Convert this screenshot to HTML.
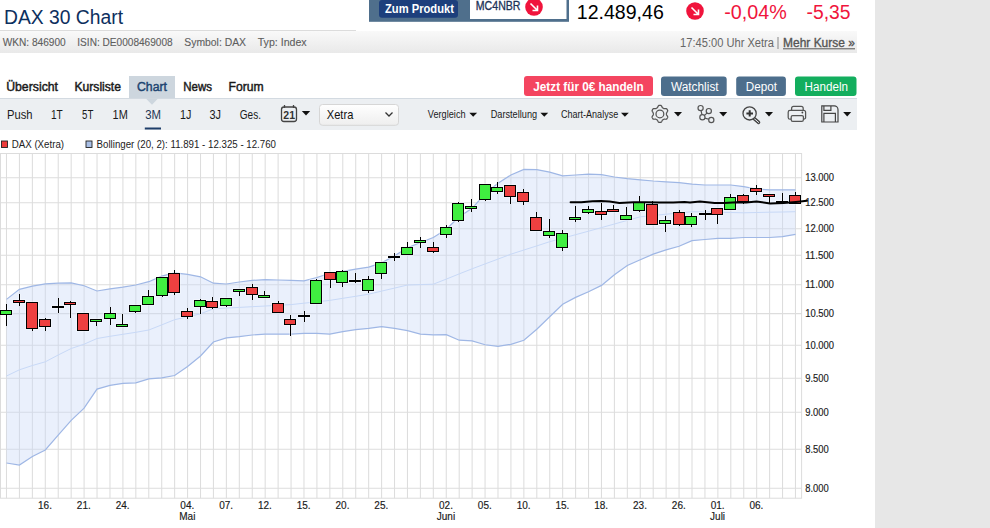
<!DOCTYPE html><html><head><meta charset="utf-8"><style>html,body{margin:0;padding:0;width:990px;height:528px;overflow:hidden;background:#fff}svg{display:block}text{font-family:"Liberation Sans", sans-serif}</style></head><body>
<svg width="990" height="528" viewBox="0 0 990 528">
<defs><linearGradient id="gb" x1="0" y1="0" x2="0" y2="1"><stop offset="0" stop-color="#f9f9f9"/><stop offset="1" stop-color="#e9e9e9"/></linearGradient><linearGradient id="gs" x1="0" y1="0" x2="0" y2="1"><stop offset="0" stop-color="#ffffff"/><stop offset="1" stop-color="#eeeeee"/></linearGradient></defs>
<rect x="875" y="0" width="115" height="528" fill="#e7e7e7"/>
<text x="4" y="24" font-size="19.5" font-weight="400" fill="#0d2f5e" text-anchor="start" textLength="119" lengthAdjust="spacingAndGlyphs">DAX 30 Chart</text>
<rect x="0" y="30" width="356" height="1" fill="#dcdcdc"/>
<rect x="0" y="31" width="857" height="22" fill="url(#gb)"/>
<text x="2.7" y="45.8" font-size="11" font-weight="400" fill="#5e5e5e" text-anchor="start" textLength="63.0" lengthAdjust="spacingAndGlyphs" stroke="#5e5e5e" stroke-width="0.12">WKN: 846900</text>
<text x="77.3" y="45.8" font-size="11" font-weight="400" fill="#5e5e5e" text-anchor="start" textLength="95.4" lengthAdjust="spacingAndGlyphs" stroke="#5e5e5e" stroke-width="0.12">ISIN: DE0008469008</text>
<text x="184.3" y="45.8" font-size="11" font-weight="400" fill="#5e5e5e" text-anchor="start" textLength="61.7" lengthAdjust="spacingAndGlyphs" stroke="#5e5e5e" stroke-width="0.12">Symbol: DAX</text>
<text x="257.7" y="45.8" font-size="11" font-weight="400" fill="#5e5e5e" text-anchor="start" textLength="49.0" lengthAdjust="spacingAndGlyphs" stroke="#5e5e5e" stroke-width="0.12">Typ: Index</text>
<rect x="369" y="0" width="200" height="21.8" fill="#4f6f8c"/>
<rect x="470" y="0" width="96.5" height="19" fill="#ffffff"/>
<rect x="379" y="0" width="79" height="17.8" rx="3" fill="#1d3f7c"/>
<text x="385" y="13.2" font-size="12.5" font-weight="700" fill="#ffffff" text-anchor="start" textLength="69" lengthAdjust="spacingAndGlyphs">Zum Produkt</text>
<text x="475.8" y="9.9" font-size="12.2" font-weight="400" fill="#1b3257" text-anchor="start" textLength="44.7" lengthAdjust="spacingAndGlyphs" stroke="#1b3257" stroke-width="0.3">MC4NBR</text>
<circle cx="534" cy="7" r="8.8" fill="#f0143c"/>
<path d="M530.5 3.5 L537.5 10.5 M537.5 5.5 L537.5 10.5 L532.5 10.5" stroke="#fff" stroke-width="1.6" fill="none"/>
<text x="576.8" y="18.9" font-size="19.6" font-weight="400" fill="#000000" text-anchor="start" textLength="87" lengthAdjust="spacingAndGlyphs">12.489,46</text>
<circle cx="695" cy="11" r="8.8" fill="#f0143c"/>
<path d="M691.5 7.5 L698.5 14.5 M698.5 9.5 L698.5 14.5 L693.5 14.5" stroke="#fff" stroke-width="1.6" fill="none"/>
<text x="724.2" y="18.8" font-size="20" font-weight="400" fill="#f0143c" text-anchor="start" textLength="62.6" lengthAdjust="spacingAndGlyphs">-0,04%</text>
<text x="806.6" y="18.8" font-size="20" font-weight="400" fill="#f0143c" text-anchor="start" textLength="44" lengthAdjust="spacingAndGlyphs">-5,35</text>
<text x="680.1" y="47.2" font-size="12" font-weight="400" fill="#666666" text-anchor="start" textLength="93.9" lengthAdjust="spacingAndGlyphs">17:45:00 Uhr Xetra</text>
<rect x="777.5" y="37" width="1" height="12" fill="#888"/>
<text x="783.1" y="47.2" font-size="12" font-weight="400" fill="#555555" text-anchor="start" textLength="71.7" lengthAdjust="spacingAndGlyphs" stroke="#555555" stroke-width="0.35">Mehr Kurse »</text>
<rect x="783" y="48.3" width="72" height="1" fill="#555"/>
<rect x="129" y="76" width="46" height="22.5" fill="#cdd6de"/>
<text x="6.2" y="91" font-size="12.5" font-weight="400" fill="#1a1a1a" text-anchor="start" textLength="51.8" lengthAdjust="spacingAndGlyphs" stroke="#1a1a1a" stroke-width="0.45">Übersicht</text>
<text x="74.4" y="91" font-size="12.5" font-weight="400" fill="#1a1a1a" text-anchor="start" textLength="46.6" lengthAdjust="spacingAndGlyphs" stroke="#1a1a1a" stroke-width="0.45">Kursliste</text>
<text x="137" y="91" font-size="12.5" font-weight="400" fill="#1c4470" text-anchor="start" textLength="30" lengthAdjust="spacingAndGlyphs" stroke="#1c4470" stroke-width="0.45">Chart</text>
<text x="183.3" y="91" font-size="12.5" font-weight="400" fill="#1a1a1a" text-anchor="start" textLength="28.7" lengthAdjust="spacingAndGlyphs" stroke="#1a1a1a" stroke-width="0.45">News</text>
<text x="228.5" y="91" font-size="12.5" font-weight="400" fill="#1a1a1a" text-anchor="start" textLength="35.1" lengthAdjust="spacingAndGlyphs" stroke="#1a1a1a" stroke-width="0.45">Forum</text>
<rect x="524" y="76" width="129" height="20" rx="3" fill="#f44560"/>
<text x="533.3" y="90.6" font-size="12.5" font-weight="700" fill="#ffffff" text-anchor="start" textLength="110.3" lengthAdjust="spacingAndGlyphs">Jetzt für 0€ handeln</text>
<rect x="661" y="76.4" width="65.7" height="19.5" rx="3" fill="#4d6e8c"/>
<text x="671" y="90.6" font-size="12.5" font-weight="400" fill="#ffffff" text-anchor="start" textLength="47.6" lengthAdjust="spacingAndGlyphs">Watchlist</text>
<rect x="736.2" y="76.4" width="49.7" height="19.5" rx="3" fill="#4d6e8c"/>
<text x="745.8" y="90.6" font-size="12.5" font-weight="400" fill="#ffffff" text-anchor="start" textLength="31.2" lengthAdjust="spacingAndGlyphs">Depot</text>
<rect x="795" y="76.4" width="61.5" height="19.5" rx="3" fill="#13ae5e"/>
<text x="804.6" y="90.6" font-size="12.5" font-weight="400" fill="#ffffff" text-anchor="start" textLength="43.4" lengthAdjust="spacingAndGlyphs">Handeln</text>
<rect x="0" y="98" width="857" height="1" fill="#d3dae1"/>
<rect x="0" y="99" width="857" height="31" fill="#eceff2"/>
<path d="M145.9 98.5 L158 98.5 L152 104.8 Z" fill="#cdd6de"/>
<text x="7" y="119.2" font-size="12.5" font-weight="400" fill="#1a1a1a" text-anchor="start" textLength="25.5" lengthAdjust="spacingAndGlyphs">Push</text>
<text x="51" y="119.2" font-size="12.5" font-weight="400" fill="#1a1a1a" text-anchor="start" textLength="11.8" lengthAdjust="spacingAndGlyphs">1T</text>
<text x="82" y="119.2" font-size="12.5" font-weight="400" fill="#1a1a1a" text-anchor="start" textLength="11.3" lengthAdjust="spacingAndGlyphs">5T</text>
<text x="112.6" y="119.2" font-size="12.5" font-weight="400" fill="#1a1a1a" text-anchor="start" textLength="15.2" lengthAdjust="spacingAndGlyphs">1M</text>
<text x="145.2" y="119.2" font-size="12.5" font-weight="400" fill="#1f3552" text-anchor="start" textLength="15.8" lengthAdjust="spacingAndGlyphs">3M</text>
<text x="180" y="119.2" font-size="12.5" font-weight="400" fill="#1a1a1a" text-anchor="start" textLength="11.4" lengthAdjust="spacingAndGlyphs">1J</text>
<text x="209.5" y="119.2" font-size="12.5" font-weight="400" fill="#1a1a1a" text-anchor="start" textLength="11.5" lengthAdjust="spacingAndGlyphs">3J</text>
<text x="239.8" y="119.2" font-size="12.5" font-weight="400" fill="#1a1a1a" text-anchor="start" textLength="21.2" lengthAdjust="spacingAndGlyphs">Ges.</text>
<rect x="144.8" y="127.5" width="16.2" height="2" fill="#1f3f6a"/>
<rect x="281.5" y="107" width="15" height="14.5" rx="2.5" fill="none" stroke="#444" stroke-width="1.3"/>
<path d="M284.5 105 v3 M293.5 105 v3" stroke="#444" stroke-width="1.3"/>
<text x="283.3" y="119.3" font-size="10.3" font-weight="700" fill="#333" text-anchor="start" textLength="11.7" lengthAdjust="spacingAndGlyphs">21</text>
<path d="M301.8 111 L310.2 111 L306 115.6 Z" fill="#111"/>
<rect x="319.5" y="104.5" width="79" height="20.8" rx="3" fill="url(#gs)" stroke="#d6d6d6" stroke-width="1"/>
<text x="326.8" y="119" font-size="13" font-weight="400" fill="#111111" text-anchor="start" textLength="26.5" lengthAdjust="spacingAndGlyphs">Xetra</text>
<path d="M385.5 112.5 L389 116 L392.5 112.5" stroke="#333" stroke-width="1.3" fill="none"/>
<text x="427.8" y="118.3" font-size="11" font-weight="400" fill="#1a1a1a" text-anchor="start" textLength="37.8" lengthAdjust="spacingAndGlyphs">Vergleich</text>
<path d="M469.3 112.8 L477.1 112.8 L473.2 116.8 Z" fill="#111"/>
<text x="490.7" y="118.3" font-size="11" font-weight="400" fill="#1a1a1a" text-anchor="start" textLength="46.4" lengthAdjust="spacingAndGlyphs">Darstellung</text>
<path d="M540.4 112.8 L548.1999999999999 112.8 L544.3 116.8 Z" fill="#111"/>
<text x="561" y="118.3" font-size="11" font-weight="400" fill="#1a1a1a" text-anchor="start" textLength="57.2" lengthAdjust="spacingAndGlyphs">Chart-Analyse</text>
<path d="M621 112.8 L628.8 112.8 L624.9 116.8 Z" fill="#111"/>
<polygon points="666.50,113.90 666.49,114.19 666.47,114.48 666.44,114.76 666.63,115.09 666.91,115.45 667.19,115.85 667.45,116.28 667.66,116.73 667.75,117.15 667.60,117.49 667.44,117.82 667.26,118.15 667.07,118.47 666.86,118.78 666.64,119.07 666.23,119.21 665.74,119.25 665.24,119.24 664.75,119.19 664.30,119.14 663.92,119.14 663.69,119.31 663.45,119.47 663.20,119.62 662.95,119.75 662.69,119.88 662.43,120.00 662.24,120.33 662.06,120.75 661.85,121.19 661.61,121.63 661.33,122.04 661.01,122.33 660.64,122.37 660.27,122.39 659.90,122.40 659.53,122.39 659.16,122.37 658.79,122.33 658.47,122.04 658.19,121.63 657.95,121.19 657.74,120.75 657.56,120.33 657.37,120.00 657.11,119.88 656.85,119.75 656.60,119.62 656.35,119.47 656.11,119.31 655.88,119.14 655.50,119.14 655.05,119.19 654.56,119.24 654.06,119.25 653.57,119.21 653.16,119.07 652.94,118.78 652.73,118.47 652.54,118.15 652.36,117.82 652.20,117.49 652.05,117.15 652.14,116.73 652.35,116.28 652.61,115.85 652.89,115.45 653.17,115.09 653.36,114.76 653.33,114.48 653.31,114.19 653.30,113.90 653.31,113.61 653.33,113.32 653.36,113.04 653.17,112.71 652.89,112.35 652.61,111.95 652.35,111.52 652.14,111.07 652.05,110.65 652.20,110.31 652.36,109.98 652.54,109.65 652.73,109.33 652.94,109.02 653.16,108.73 653.57,108.59 654.06,108.55 654.56,108.56 655.05,108.61 655.50,108.66 655.88,108.66 656.11,108.49 656.35,108.33 656.60,108.18 656.85,108.05 657.11,107.92 657.37,107.80 657.56,107.47 657.74,107.05 657.95,106.61 658.19,106.17 658.47,105.76 658.79,105.47 659.16,105.43 659.53,105.41 659.90,105.40 660.27,105.41 660.64,105.43 661.01,105.47 661.33,105.76 661.61,106.17 661.85,106.61 662.06,107.05 662.24,107.47 662.43,107.80 662.69,107.92 662.95,108.05 663.20,108.18 663.45,108.33 663.69,108.49 663.92,108.66 664.30,108.66 664.75,108.61 665.24,108.56 665.74,108.55 666.23,108.59 666.64,108.73 666.86,109.02 667.07,109.33 667.26,109.65 667.44,109.98 667.60,110.31 667.75,110.65 667.66,111.07 667.45,111.52 667.19,111.95 666.91,112.35 666.63,112.71 666.44,113.04 666.47,113.32 666.49,113.61" fill="none" stroke="#555" stroke-width="1.25" stroke-linejoin="round"/>
<circle cx="659.9" cy="113.9" r="3.9" fill="none" stroke="#555" stroke-width="1.25"/>
<path d="M674 112 L682 112 L678 116.5 Z" fill="#111"/>
<path d="M700.6 108.1 L702.4 117.2 L709 111.4 M702.3 117.3 L711.4 120" stroke="#555" stroke-width="1.2" fill="none"/>
<circle cx="700.6" cy="108.1" r="2.6" fill="#eceff2" stroke="#555" stroke-width="1.2"/>
<circle cx="708.8" cy="111.1" r="2.6" fill="#eceff2" stroke="#555" stroke-width="1.2"/>
<circle cx="702.4" cy="117.2" r="2.6" fill="#eceff2" stroke="#555" stroke-width="1.2"/>
<circle cx="711.3" cy="120" r="2.6" fill="#eceff2" stroke="#555" stroke-width="1.2"/>
<path d="M719.2 112 L727.2 112 L723.2 116.5 Z" fill="#111"/>
<path d="M754.2 118.6 L758.6 122.4" stroke="#444" stroke-width="3.4" stroke-linecap="round" fill="none"/>
<path d="M754.2 118.6 L758.6 122.4" stroke="#eceff2" stroke-width="1.0" stroke-linecap="round" fill="none"/>
<circle cx="749.6" cy="113.4" r="6.6" fill="#eceff2" stroke="#444" stroke-width="1.3"/>
<path d="M746.4 113.4 h6.6 M749.7 110.2 v6.4" stroke="#333" stroke-width="2" fill="none"/>
<path d="M765 112 L773 112 L769 116.5 Z" fill="#111"/>
<path d="M791.6 110.2 v-1.8 a2 2 0 0 1 2 -2 h7.6 a2 2 0 0 1 2 2 v1.8" stroke="#555" stroke-width="1.25" fill="none"/>
<path d="M791.2 119.2 h-1.2 a1.8 1.8 0 0 1 -1.8 -1.8 v-5.2 a1.8 1.8 0 0 1 1.8 -1.8 h13.8 a1.8 1.8 0 0 1 1.8 1.8 v5.2 a1.8 1.8 0 0 1 -1.8 1.8 h-1.2" stroke="#555" stroke-width="1.25" fill="none"/>
<path d="M792.6 115.6 h9.4 a1.4 1.4 0 0 1 1.4 1.4 v2.8 a1.6 1.6 0 0 1 -1.6 1.6 h-9 a1.6 1.6 0 0 1 -1.6 -1.6 v-2.8 a1.4 1.4 0 0 1 1.4 -1.4 z" stroke="#555" stroke-width="1.25" fill="#eceff2"/>
<circle cx="802.4" cy="112.5" r="0.9" fill="#444"/>
<path d="M821.8 105.9 h12.4 a3.8 3.8 0 0 1 3.8 3.8 v12.3 h-16.2 z" stroke="#444" stroke-width="1.2" fill="none"/>
<path d="M823.9 105.9 v4.4 h7 v-4.4 M823.9 122 v-8.6 h11.5 v8.6" stroke="#444" stroke-width="1.2" fill="none"/>
<path d="M843.2 112 L851.2 112 L847.2 116.5 Z" fill="#111"/>
<rect x="1.5" y="141" width="6" height="6.5" fill="#ee3b3b" stroke="#222" stroke-width="0.9"/>
<text x="11.7" y="147.9" font-size="10" font-weight="400" fill="#222222" text-anchor="start" textLength="52.4" lengthAdjust="spacingAndGlyphs">DAX (Xetra)</text>
<rect x="86" y="141" width="6" height="6.5" fill="#a9bfe6" stroke="#222" stroke-width="0.9"/>
<text x="96.6" y="147.9" font-size="10" font-weight="400" fill="#222222" text-anchor="start" textLength="179.4" lengthAdjust="spacingAndGlyphs">Bollinger (20, 2): 11.891 - 12.325 - 12.760</text>
<rect x="0" y="153.5" width="801.6" height="344.7" fill="#ffffff"/>
<line x1="6.5" y1="153.5" x2="6.5" y2="498.2" stroke="#dddddd" stroke-width="1.05"/>
<line x1="19.43" y1="153.5" x2="19.43" y2="498.2" stroke="#dddddd" stroke-width="1.05"/>
<line x1="32.37" y1="153.5" x2="32.37" y2="498.2" stroke="#dddddd" stroke-width="1.05"/>
<line x1="45.3" y1="153.5" x2="45.3" y2="498.2" stroke="#dddddd" stroke-width="1.05"/>
<line x1="58.24" y1="153.5" x2="58.24" y2="498.2" stroke="#dddddd" stroke-width="1.05"/>
<line x1="71.17" y1="153.5" x2="71.17" y2="498.2" stroke="#dddddd" stroke-width="1.05"/>
<line x1="84.1" y1="153.5" x2="84.1" y2="498.2" stroke="#dddddd" stroke-width="1.05"/>
<line x1="97.04" y1="153.5" x2="97.04" y2="498.2" stroke="#dddddd" stroke-width="1.05"/>
<line x1="109.97" y1="153.5" x2="109.97" y2="498.2" stroke="#dddddd" stroke-width="1.05"/>
<line x1="122.91" y1="153.5" x2="122.91" y2="498.2" stroke="#dddddd" stroke-width="1.05"/>
<line x1="135.84" y1="153.5" x2="135.84" y2="498.2" stroke="#dddddd" stroke-width="1.05"/>
<line x1="148.77" y1="153.5" x2="148.77" y2="498.2" stroke="#dddddd" stroke-width="1.05"/>
<line x1="161.71" y1="153.5" x2="161.71" y2="498.2" stroke="#dddddd" stroke-width="1.05"/>
<line x1="174.64" y1="153.5" x2="174.64" y2="498.2" stroke="#dddddd" stroke-width="1.05"/>
<line x1="187.58" y1="153.5" x2="187.58" y2="498.2" stroke="#dddddd" stroke-width="1.05"/>
<line x1="200.51" y1="153.5" x2="200.51" y2="498.2" stroke="#dddddd" stroke-width="1.05"/>
<line x1="213.44" y1="153.5" x2="213.44" y2="498.2" stroke="#dddddd" stroke-width="1.05"/>
<line x1="226.38" y1="153.5" x2="226.38" y2="498.2" stroke="#dddddd" stroke-width="1.05"/>
<line x1="239.31" y1="153.5" x2="239.31" y2="498.2" stroke="#dddddd" stroke-width="1.05"/>
<line x1="252.25" y1="153.5" x2="252.25" y2="498.2" stroke="#dddddd" stroke-width="1.05"/>
<line x1="265.18" y1="153.5" x2="265.18" y2="498.2" stroke="#dddddd" stroke-width="1.05"/>
<line x1="278.11" y1="153.5" x2="278.11" y2="498.2" stroke="#dddddd" stroke-width="1.05"/>
<line x1="291.05" y1="153.5" x2="291.05" y2="498.2" stroke="#dddddd" stroke-width="1.05"/>
<line x1="303.98" y1="153.5" x2="303.98" y2="498.2" stroke="#dddddd" stroke-width="1.05"/>
<line x1="316.92" y1="153.5" x2="316.92" y2="498.2" stroke="#dddddd" stroke-width="1.05"/>
<line x1="329.85" y1="153.5" x2="329.85" y2="498.2" stroke="#dddddd" stroke-width="1.05"/>
<line x1="342.78" y1="153.5" x2="342.78" y2="498.2" stroke="#dddddd" stroke-width="1.05"/>
<line x1="355.72" y1="153.5" x2="355.72" y2="498.2" stroke="#dddddd" stroke-width="1.05"/>
<line x1="368.65" y1="153.5" x2="368.65" y2="498.2" stroke="#dddddd" stroke-width="1.05"/>
<line x1="381.59" y1="153.5" x2="381.59" y2="498.2" stroke="#dddddd" stroke-width="1.05"/>
<line x1="394.52" y1="153.5" x2="394.52" y2="498.2" stroke="#dddddd" stroke-width="1.05"/>
<line x1="407.45" y1="153.5" x2="407.45" y2="498.2" stroke="#dddddd" stroke-width="1.05"/>
<line x1="420.39" y1="153.5" x2="420.39" y2="498.2" stroke="#dddddd" stroke-width="1.05"/>
<line x1="433.32" y1="153.5" x2="433.32" y2="498.2" stroke="#dddddd" stroke-width="1.05"/>
<line x1="446.26" y1="153.5" x2="446.26" y2="498.2" stroke="#dddddd" stroke-width="1.05"/>
<line x1="459.19" y1="153.5" x2="459.19" y2="498.2" stroke="#dddddd" stroke-width="1.05"/>
<line x1="472.12" y1="153.5" x2="472.12" y2="498.2" stroke="#dddddd" stroke-width="1.05"/>
<line x1="485.06" y1="153.5" x2="485.06" y2="498.2" stroke="#dddddd" stroke-width="1.05"/>
<line x1="497.99" y1="153.5" x2="497.99" y2="498.2" stroke="#dddddd" stroke-width="1.05"/>
<line x1="510.93" y1="153.5" x2="510.93" y2="498.2" stroke="#dddddd" stroke-width="1.05"/>
<line x1="523.86" y1="153.5" x2="523.86" y2="498.2" stroke="#dddddd" stroke-width="1.05"/>
<line x1="536.79" y1="153.5" x2="536.79" y2="498.2" stroke="#dddddd" stroke-width="1.05"/>
<line x1="549.73" y1="153.5" x2="549.73" y2="498.2" stroke="#dddddd" stroke-width="1.05"/>
<line x1="562.66" y1="153.5" x2="562.66" y2="498.2" stroke="#dddddd" stroke-width="1.05"/>
<line x1="575.6" y1="153.5" x2="575.6" y2="498.2" stroke="#dddddd" stroke-width="1.05"/>
<line x1="588.53" y1="153.5" x2="588.53" y2="498.2" stroke="#dddddd" stroke-width="1.05"/>
<line x1="601.46" y1="153.5" x2="601.46" y2="498.2" stroke="#dddddd" stroke-width="1.05"/>
<line x1="614.4" y1="153.5" x2="614.4" y2="498.2" stroke="#dddddd" stroke-width="1.05"/>
<line x1="627.33" y1="153.5" x2="627.33" y2="498.2" stroke="#dddddd" stroke-width="1.05"/>
<line x1="640.27" y1="153.5" x2="640.27" y2="498.2" stroke="#dddddd" stroke-width="1.05"/>
<line x1="653.2" y1="153.5" x2="653.2" y2="498.2" stroke="#dddddd" stroke-width="1.05"/>
<line x1="666.13" y1="153.5" x2="666.13" y2="498.2" stroke="#dddddd" stroke-width="1.05"/>
<line x1="679.07" y1="153.5" x2="679.07" y2="498.2" stroke="#dddddd" stroke-width="1.05"/>
<line x1="692.0" y1="153.5" x2="692.0" y2="498.2" stroke="#dddddd" stroke-width="1.05"/>
<line x1="704.94" y1="153.5" x2="704.94" y2="498.2" stroke="#dddddd" stroke-width="1.05"/>
<line x1="717.87" y1="153.5" x2="717.87" y2="498.2" stroke="#dddddd" stroke-width="1.05"/>
<line x1="730.8" y1="153.5" x2="730.8" y2="498.2" stroke="#dddddd" stroke-width="1.05"/>
<line x1="743.74" y1="153.5" x2="743.74" y2="498.2" stroke="#dddddd" stroke-width="1.05"/>
<line x1="756.67" y1="153.5" x2="756.67" y2="498.2" stroke="#dddddd" stroke-width="1.05"/>
<line x1="769.61" y1="153.5" x2="769.61" y2="498.2" stroke="#dddddd" stroke-width="1.05"/>
<line x1="782.54" y1="153.5" x2="782.54" y2="498.2" stroke="#dddddd" stroke-width="1.05"/>
<line x1="795.47" y1="153.5" x2="795.47" y2="498.2" stroke="#dddddd" stroke-width="1.05"/>
<line x1="0" y1="177.8" x2="801.6" y2="177.8" stroke="#dddddd" stroke-width="1.05"/>
<line x1="0" y1="202.8" x2="801.6" y2="202.8" stroke="#dddddd" stroke-width="1.05"/>
<line x1="0" y1="228.8" x2="801.6" y2="228.8" stroke="#dddddd" stroke-width="1.05"/>
<line x1="0" y1="255.3" x2="801.6" y2="255.3" stroke="#dddddd" stroke-width="1.05"/>
<line x1="0" y1="284.7" x2="801.6" y2="284.7" stroke="#dddddd" stroke-width="1.05"/>
<line x1="0" y1="313.6" x2="801.6" y2="313.6" stroke="#dddddd" stroke-width="1.05"/>
<line x1="0" y1="345.3" x2="801.6" y2="345.3" stroke="#dddddd" stroke-width="1.05"/>
<line x1="0" y1="378.3" x2="801.6" y2="378.3" stroke="#dddddd" stroke-width="1.05"/>
<line x1="0" y1="412.3" x2="801.6" y2="412.3" stroke="#dddddd" stroke-width="1.05"/>
<line x1="0" y1="449.3" x2="801.6" y2="449.3" stroke="#dddddd" stroke-width="1.05"/>
<line x1="0" y1="488.3" x2="801.6" y2="488.3" stroke="#dddddd" stroke-width="1.05"/>
<rect x="0.5" y="153.5" width="801.1" height="344.7" fill="none" stroke="#dcdcdc" stroke-width="1"/>
<polygon points="6.5,299.4 19.4,289.4 32.4,286.1 45.3,283.9 58.2,283.2 71.2,282.8 84.1,285.7 97.0,291 110.0,288.8 122.9,287.2 135.8,285 148.8,281.7 161.7,276.1 174.6,272.8 187.6,274.4 200.5,276.8 213.4,283.2 226.4,284.0 239.3,282.0 252.2,280.4 265.2,279.6 278.1,280 291.0,280.4 304.0,280.8 316.9,277.5 329.8,273.3 342.8,271.3 355.7,269.2 368.7,267.1 381.6,262.9 394.5,255.8 407.5,247.9 420.4,242.5 433.3,237.5 446.3,229.2 459.2,216.7 472.1,208.3 485.1,193.75 498.0,183.3 510.9,175 523.9,169.4 536.8,169.6 549.7,172.1 562.7,175.8 575.6,175 588.5,174.2 601.5,174.7 614.4,177 627.3,178.6 640.3,179.8 653.2,181 666.1,181.8 679.1,182.6 692.0,184.2 704.9,185 717.9,185 730.8,185 743.7,186.6 756.7,189 769.6,189.8 782.5,189.8 795.5,189.8 795.5,234.3 782.5,236.7 769.6,237.5 756.7,237.5 743.7,237.5 730.8,238.3 717.9,238.3 704.9,239.5 692.0,240.7 679.1,246.3 666.1,249.9 653.2,254.1 640.3,259.8 627.3,265.5 614.4,274.7 601.5,285.4 588.5,291.8 575.6,297.4 562.7,304.2 549.7,316.7 536.8,329.2 523.9,340.2 510.9,344.3 498.0,346.4 485.1,344.75 472.1,340.9 459.2,340.2 446.3,334.6 433.3,334.9 420.4,334.1 407.5,330.6 394.5,328.3 381.6,326.7 368.7,328.3 355.7,329.6 342.8,331.7 329.8,334.2 316.9,333.3 304.0,333.3 291.0,334.2 278.1,334.2 265.2,334.2 252.2,335 239.3,336.7 226.4,337.9 213.4,342 200.5,356 187.6,366.4 174.6,375.5 161.7,377.8 148.8,378.9 135.8,382.9 122.9,383.4 110.0,385.4 97.0,389.1 84.1,408.2 71.2,420.4 58.2,435.2 45.3,450 32.4,456.5 19.4,465 6.5,463" fill="#c8d8f7" fill-opacity="0.38"/>
<polyline points="6.5,299.4 19.4,289.4 32.4,286.1 45.3,283.9 58.2,283.2 71.2,282.8 84.1,285.7 97.0,291 110.0,288.8 122.9,287.2 135.8,285 148.8,281.7 161.7,276.1 174.6,272.8 187.6,274.4 200.5,276.8 213.4,283.2 226.4,284.0 239.3,282.0 252.2,280.4 265.2,279.6 278.1,280 291.0,280.4 304.0,280.8 316.9,277.5 329.8,273.3 342.8,271.3 355.7,269.2 368.7,267.1 381.6,262.9 394.5,255.8 407.5,247.9 420.4,242.5 433.3,237.5 446.3,229.2 459.2,216.7 472.1,208.3 485.1,193.75 498.0,183.3 510.9,175 523.9,169.4 536.8,169.6 549.7,172.1 562.7,175.8 575.6,175 588.5,174.2 601.5,174.7 614.4,177 627.3,178.6 640.3,179.8 653.2,181 666.1,181.8 679.1,182.6 692.0,184.2 704.9,185 717.9,185 730.8,185 743.7,186.6 756.7,189 769.6,189.8 782.5,189.8 795.5,189.8" fill="none" stroke="#9fb7e5" stroke-width="1.2"/>
<polyline points="6.5,463 19.4,465 32.4,456.5 45.3,450 58.2,435.2 71.2,420.4 84.1,408.2 97.0,389.1 110.0,385.4 122.9,383.4 135.8,382.9 148.8,378.9 161.7,377.8 174.6,375.5 187.6,366.4 200.5,356 213.4,342 226.4,337.9 239.3,336.7 252.2,335 265.2,334.2 278.1,334.2 291.0,334.2 304.0,333.3 316.9,333.3 329.8,334.2 342.8,331.7 355.7,329.6 368.7,328.3 381.6,326.7 394.5,328.3 407.5,330.6 420.4,334.1 433.3,334.9 446.3,334.6 459.2,340.2 472.1,340.9 485.1,344.75 498.0,346.4 510.9,344.3 523.9,340.2 536.8,329.2 549.7,316.7 562.7,304.2 575.6,297.4 588.5,291.8 601.5,285.4 614.4,274.7 627.3,265.5 640.3,259.8 653.2,254.1 666.1,249.9 679.1,246.3 692.0,240.7 704.9,239.5 717.9,238.3 730.8,238.3 743.7,237.5 756.7,237.5 769.6,237.5 782.5,236.7 795.5,234.3" fill="none" stroke="#9fb7e5" stroke-width="1.2"/>
<polyline points="6.5,376.0 19.4,369.8 32.4,365.5 45.3,361.8 58.2,355.0 71.2,348.5 84.1,344.2 97.0,338.5 110.0,336.3 122.9,334.3 135.8,332.3 148.8,330.0 161.7,324.9 174.6,319.7 187.6,316.8 200.5,313.8 213.4,308.8 226.4,308.1 239.3,307.4 252.2,306.7 265.2,306.0 278.1,305.3 291.0,304.6 304.0,303.2 316.9,301.8 329.8,300.4 342.8,298.3 355.7,296.3 368.7,294.2 381.6,291.1 394.5,288.1 407.5,285.0 420.4,284.6 433.3,284.2 446.3,279.1 459.2,273.9 472.1,268.8 485.1,263.9 498.0,259.1 510.9,254.2 523.9,250.0 536.8,245.9 549.7,241.7 562.7,238.2 575.6,234.7 588.5,231.2 601.5,227.6 614.4,224.0 627.3,220.4 640.3,216.8 653.2,215.5 666.1,214.2 679.1,213.0 692.0,211.7 704.9,212.0 717.9,212.2 730.8,212.5 743.7,212.8 756.7,212.5 769.6,212.2 782.5,212.0 795.5,211.7" fill="none" stroke="#c8d9f7" stroke-width="1"/>
<g fill="none" stroke="#ffffff" stroke-opacity="0.4" stroke-width="2.6"><line x1="6.5" y1="304" x2="6.5" y2="326"/><rect x="0.5" y="310.5" width="11" height="4"/><line x1="19.5" y1="294" x2="19.5" y2="306"/><rect x="13.5" y="300.5" width="11" height="2"/><line x1="32.5" y1="302" x2="32.5" y2="331"/><rect x="26.5" y="302.5" width="11" height="26"/><line x1="45.5" y1="318" x2="45.5" y2="331"/><rect x="39.5" y="319.5" width="11" height="7"/><line x1="58.5" y1="298" x2="58.5" y2="313"/><rect x="52.5" y="306.5" width="11" height="1"/><line x1="70.5" y1="301" x2="70.5" y2="318"/><rect x="64.5" y="302.5" width="11" height="2"/><line x1="83.5" y1="313" x2="83.5" y2="330"/><rect x="77.5" y="313.5" width="11" height="17"/><line x1="96.5" y1="319" x2="96.5" y2="326"/><rect x="90.5" y="319.5" width="11" height="2"/><line x1="110.5" y1="307" x2="110.5" y2="325"/><rect x="104.5" y="313.5" width="11" height="5"/><line x1="122.5" y1="314" x2="122.5" y2="327"/><rect x="116.5" y="324.5" width="11" height="2"/><line x1="135.5" y1="305" x2="135.5" y2="313"/><rect x="129.5" y="305.5" width="11" height="6"/><line x1="148.5" y1="290" x2="148.5" y2="305"/><rect x="142.5" y="296.5" width="11" height="8"/><line x1="162.5" y1="277" x2="162.5" y2="297"/><rect x="156.5" y="277.5" width="11" height="18"/><line x1="174.5" y1="270" x2="174.5" y2="295"/><rect x="168.5" y="273.5" width="11" height="19"/><line x1="187.5" y1="308" x2="187.5" y2="319"/><rect x="181.5" y="311.5" width="11" height="5"/><line x1="200.5" y1="299" x2="200.5" y2="314"/><rect x="194.5" y="300.5" width="11" height="6"/><line x1="212.5" y1="297" x2="212.5" y2="309"/><rect x="206.5" y="301.5" width="11" height="6"/><line x1="226.5" y1="298" x2="226.5" y2="307"/><rect x="220.5" y="298.5" width="11" height="7"/><line x1="239.5" y1="289" x2="239.5" y2="296"/><rect x="233.5" y="289.5" width="11" height="2"/><line x1="252.5" y1="284" x2="252.5" y2="300"/><rect x="246.5" y="287.5" width="11" height="7"/><line x1="264.5" y1="291" x2="264.5" y2="298"/><rect x="258.5" y="295.5" width="11" height="2"/><line x1="278.5" y1="301" x2="278.5" y2="313"/><rect x="272.5" y="303.5" width="11" height="9"/><line x1="290.5" y1="315" x2="290.5" y2="336"/><rect x="284.5" y="319.5" width="11" height="5"/><line x1="304.5" y1="311" x2="304.5" y2="322"/><rect x="298.5" y="315.5" width="11" height="1"/><line x1="316.5" y1="279" x2="316.5" y2="304"/><rect x="310.5" y="280.5" width="11" height="23"/><line x1="330.5" y1="272" x2="330.5" y2="288"/><rect x="324.5" y="272.5" width="11" height="7"/><line x1="342.5" y1="270" x2="342.5" y2="287"/><rect x="336.5" y="271.5" width="11" height="11"/><line x1="355.5" y1="273" x2="355.5" y2="283"/><rect x="349.5" y="280.5" width="11" height="1"/><line x1="368.5" y1="276" x2="368.5" y2="293"/><rect x="362.5" y="279.5" width="11" height="11"/><line x1="381.5" y1="262" x2="381.5" y2="279"/><rect x="375.5" y="262.5" width="11" height="11"/><line x1="394.5" y1="253" x2="394.5" y2="261"/><rect x="388.5" y="256.5" width="11" height="1"/><line x1="407.5" y1="242" x2="407.5" y2="255"/><rect x="401.5" y="247.5" width="11" height="7"/><line x1="420.5" y1="237" x2="420.5" y2="248"/><rect x="414.5" y="240.5" width="11" height="2"/><line x1="433.5" y1="242" x2="433.5" y2="253"/><rect x="427.5" y="247.5" width="11" height="4"/><line x1="446.5" y1="225" x2="446.5" y2="238"/><rect x="440.5" y="227.5" width="11" height="7"/><line x1="458.5" y1="202" x2="458.5" y2="222"/><rect x="452.5" y="203.5" width="11" height="17"/><line x1="471.5" y1="199" x2="471.5" y2="212"/><rect x="465.5" y="206.5" width="11" height="2"/><line x1="485.5" y1="184" x2="485.5" y2="201"/><rect x="479.5" y="184.5" width="11" height="15"/><line x1="497.5" y1="182" x2="497.5" y2="194"/><rect x="491.5" y="187.5" width="11" height="4"/><line x1="510.5" y1="185" x2="510.5" y2="204"/><rect x="504.5" y="185.5" width="11" height="11"/><line x1="523.5" y1="189" x2="523.5" y2="205"/><rect x="517.5" y="192.5" width="11" height="9"/><line x1="536.5" y1="212" x2="536.5" y2="231"/><rect x="530.5" y="217.5" width="11" height="13"/><line x1="549.5" y1="219" x2="549.5" y2="238"/><rect x="543.5" y="231.5" width="11" height="4"/><line x1="562.5" y1="230" x2="562.5" y2="251"/><rect x="556.5" y="233.5" width="11" height="14"/><line x1="575.5" y1="206" x2="575.5" y2="222"/><rect x="569.5" y="217.5" width="11" height="2"/><line x1="588.5" y1="206" x2="588.5" y2="214"/><rect x="582.5" y="209.5" width="11" height="3"/><line x1="601.5" y1="203" x2="601.5" y2="220"/><rect x="595.5" y="211.5" width="11" height="3"/><line x1="613.5" y1="205" x2="613.5" y2="212"/><rect x="607.5" y="209.5" width="11" height="2"/><line x1="626.5" y1="207" x2="626.5" y2="220"/><rect x="620.5" y="215.5" width="11" height="4"/><line x1="639.5" y1="196" x2="639.5" y2="212"/><rect x="633.5" y="202.5" width="11" height="8"/><line x1="652.5" y1="201" x2="652.5" y2="225"/><rect x="646.5" y="204.5" width="11" height="20"/><line x1="665.5" y1="216" x2="665.5" y2="232"/><rect x="659.5" y="220.5" width="11" height="3"/><line x1="679.5" y1="210" x2="679.5" y2="226"/><rect x="673.5" y="212.5" width="11" height="12"/><line x1="691.5" y1="213" x2="691.5" y2="227"/><rect x="685.5" y="216.5" width="11" height="8"/><line x1="705.5" y1="210" x2="705.5" y2="220"/><rect x="699.5" y="213.5" width="11" height="1"/><line x1="717.5" y1="208" x2="717.5" y2="224"/><rect x="711.5" y="208.5" width="11" height="6"/><line x1="730.5" y1="194" x2="730.5" y2="210"/><rect x="724.5" y="197.5" width="11" height="12"/><line x1="743.5" y1="194" x2="743.5" y2="204"/><rect x="737.5" y="195.5" width="11" height="6"/><line x1="756.5" y1="185" x2="756.5" y2="195"/><rect x="750.5" y="188.5" width="11" height="3"/><line x1="769.5" y1="194" x2="769.5" y2="203"/><rect x="763.5" y="194.5" width="11" height="2"/><line x1="782.5" y1="193" x2="782.5" y2="203"/><rect x="776.5" y="201.5" width="11" height="1"/><line x1="795.5" y1="192" x2="795.5" y2="204"/><rect x="789.5" y="195.5" width="11" height="8"/></g>
<line x1="6.5" y1="304" x2="6.5" y2="326" stroke="#000" stroke-width="1"/><rect x="0.5" y="310.5" width="11" height="4" fill="#40ee40" stroke="#000" stroke-width="1"/><line x1="19.5" y1="294" x2="19.5" y2="306" stroke="#000" stroke-width="1"/><rect x="13.5" y="300.5" width="11" height="2" fill="#ee4040" stroke="#000" stroke-width="1"/><line x1="32.5" y1="302" x2="32.5" y2="331" stroke="#000" stroke-width="1"/><rect x="26.5" y="302.5" width="11" height="26" fill="#ee4040" stroke="#000" stroke-width="1"/><line x1="45.5" y1="318" x2="45.5" y2="331" stroke="#000" stroke-width="1"/><rect x="39.5" y="319.5" width="11" height="7" fill="#ee4040" stroke="#000" stroke-width="1"/><line x1="58.5" y1="298" x2="58.5" y2="313" stroke="#000" stroke-width="1"/><rect x="52.5" y="306.5" width="11" height="1" fill="#000" stroke="#000" stroke-width="1"/><line x1="70.5" y1="301" x2="70.5" y2="318" stroke="#000" stroke-width="1"/><rect x="64.5" y="302.5" width="11" height="2" fill="#ee4040" stroke="#000" stroke-width="1"/><line x1="83.5" y1="313" x2="83.5" y2="330" stroke="#000" stroke-width="1"/><rect x="77.5" y="313.5" width="11" height="17" fill="#ee4040" stroke="#000" stroke-width="1"/><line x1="96.5" y1="319" x2="96.5" y2="326" stroke="#000" stroke-width="1"/><rect x="90.5" y="319.5" width="11" height="2" fill="#40ee40" stroke="#000" stroke-width="1"/><line x1="110.5" y1="307" x2="110.5" y2="325" stroke="#000" stroke-width="1"/><rect x="104.5" y="313.5" width="11" height="5" fill="#40ee40" stroke="#000" stroke-width="1"/><line x1="122.5" y1="314" x2="122.5" y2="327" stroke="#000" stroke-width="1"/><rect x="116.5" y="324.5" width="11" height="2" fill="#40ee40" stroke="#000" stroke-width="1"/><line x1="135.5" y1="305" x2="135.5" y2="313" stroke="#000" stroke-width="1"/><rect x="129.5" y="305.5" width="11" height="6" fill="#40ee40" stroke="#000" stroke-width="1"/><line x1="148.5" y1="290" x2="148.5" y2="305" stroke="#000" stroke-width="1"/><rect x="142.5" y="296.5" width="11" height="8" fill="#40ee40" stroke="#000" stroke-width="1"/><line x1="162.5" y1="277" x2="162.5" y2="297" stroke="#000" stroke-width="1"/><rect x="156.5" y="277.5" width="11" height="18" fill="#40ee40" stroke="#000" stroke-width="1"/><line x1="174.5" y1="270" x2="174.5" y2="295" stroke="#000" stroke-width="1"/><rect x="168.5" y="273.5" width="11" height="19" fill="#ee4040" stroke="#000" stroke-width="1"/><line x1="187.5" y1="308" x2="187.5" y2="319" stroke="#000" stroke-width="1"/><rect x="181.5" y="311.5" width="11" height="5" fill="#ee4040" stroke="#000" stroke-width="1"/><line x1="200.5" y1="299" x2="200.5" y2="314" stroke="#000" stroke-width="1"/><rect x="194.5" y="300.5" width="11" height="6" fill="#40ee40" stroke="#000" stroke-width="1"/><line x1="212.5" y1="297" x2="212.5" y2="309" stroke="#000" stroke-width="1"/><rect x="206.5" y="301.5" width="11" height="6" fill="#ee4040" stroke="#000" stroke-width="1"/><line x1="226.5" y1="298" x2="226.5" y2="307" stroke="#000" stroke-width="1"/><rect x="220.5" y="298.5" width="11" height="7" fill="#40ee40" stroke="#000" stroke-width="1"/><line x1="239.5" y1="289" x2="239.5" y2="296" stroke="#000" stroke-width="1"/><rect x="233.5" y="289.5" width="11" height="2" fill="#40ee40" stroke="#000" stroke-width="1"/><line x1="252.5" y1="284" x2="252.5" y2="300" stroke="#000" stroke-width="1"/><rect x="246.5" y="287.5" width="11" height="7" fill="#ee4040" stroke="#000" stroke-width="1"/><line x1="264.5" y1="291" x2="264.5" y2="298" stroke="#000" stroke-width="1"/><rect x="258.5" y="295.5" width="11" height="2" fill="#40ee40" stroke="#000" stroke-width="1"/><line x1="278.5" y1="301" x2="278.5" y2="313" stroke="#000" stroke-width="1"/><rect x="272.5" y="303.5" width="11" height="9" fill="#ee4040" stroke="#000" stroke-width="1"/><line x1="290.5" y1="315" x2="290.5" y2="336" stroke="#000" stroke-width="1"/><rect x="284.5" y="319.5" width="11" height="5" fill="#ee4040" stroke="#000" stroke-width="1"/><line x1="304.5" y1="311" x2="304.5" y2="322" stroke="#000" stroke-width="1"/><rect x="298.5" y="315.5" width="11" height="1" fill="#000" stroke="#000" stroke-width="1"/><line x1="316.5" y1="279" x2="316.5" y2="304" stroke="#000" stroke-width="1"/><rect x="310.5" y="280.5" width="11" height="23" fill="#40ee40" stroke="#000" stroke-width="1"/><line x1="330.5" y1="272" x2="330.5" y2="288" stroke="#000" stroke-width="1"/><rect x="324.5" y="272.5" width="11" height="7" fill="#ee4040" stroke="#000" stroke-width="1"/><line x1="342.5" y1="270" x2="342.5" y2="287" stroke="#000" stroke-width="1"/><rect x="336.5" y="271.5" width="11" height="11" fill="#40ee40" stroke="#000" stroke-width="1"/><line x1="355.5" y1="273" x2="355.5" y2="283" stroke="#000" stroke-width="1"/><rect x="349.5" y="280.5" width="11" height="1" fill="#000" stroke="#000" stroke-width="1"/><line x1="368.5" y1="276" x2="368.5" y2="293" stroke="#000" stroke-width="1"/><rect x="362.5" y="279.5" width="11" height="11" fill="#40ee40" stroke="#000" stroke-width="1"/><line x1="381.5" y1="262" x2="381.5" y2="279" stroke="#000" stroke-width="1"/><rect x="375.5" y="262.5" width="11" height="11" fill="#40ee40" stroke="#000" stroke-width="1"/><line x1="394.5" y1="253" x2="394.5" y2="261" stroke="#000" stroke-width="1"/><rect x="388.5" y="256.5" width="11" height="1" fill="#000" stroke="#000" stroke-width="1"/><line x1="407.5" y1="242" x2="407.5" y2="255" stroke="#000" stroke-width="1"/><rect x="401.5" y="247.5" width="11" height="7" fill="#40ee40" stroke="#000" stroke-width="1"/><line x1="420.5" y1="237" x2="420.5" y2="248" stroke="#000" stroke-width="1"/><rect x="414.5" y="240.5" width="11" height="2" fill="#40ee40" stroke="#000" stroke-width="1"/><line x1="433.5" y1="242" x2="433.5" y2="253" stroke="#000" stroke-width="1"/><rect x="427.5" y="247.5" width="11" height="4" fill="#ee4040" stroke="#000" stroke-width="1"/><line x1="446.5" y1="225" x2="446.5" y2="238" stroke="#000" stroke-width="1"/><rect x="440.5" y="227.5" width="11" height="7" fill="#40ee40" stroke="#000" stroke-width="1"/><line x1="458.5" y1="202" x2="458.5" y2="222" stroke="#000" stroke-width="1"/><rect x="452.5" y="203.5" width="11" height="17" fill="#40ee40" stroke="#000" stroke-width="1"/><line x1="471.5" y1="199" x2="471.5" y2="212" stroke="#000" stroke-width="1"/><rect x="465.5" y="206.5" width="11" height="2" fill="#40ee40" stroke="#000" stroke-width="1"/><line x1="485.5" y1="184" x2="485.5" y2="201" stroke="#000" stroke-width="1"/><rect x="479.5" y="184.5" width="11" height="15" fill="#40ee40" stroke="#000" stroke-width="1"/><line x1="497.5" y1="182" x2="497.5" y2="194" stroke="#000" stroke-width="1"/><rect x="491.5" y="187.5" width="11" height="4" fill="#40ee40" stroke="#000" stroke-width="1"/><line x1="510.5" y1="185" x2="510.5" y2="204" stroke="#000" stroke-width="1"/><rect x="504.5" y="185.5" width="11" height="11" fill="#ee4040" stroke="#000" stroke-width="1"/><line x1="523.5" y1="189" x2="523.5" y2="205" stroke="#000" stroke-width="1"/><rect x="517.5" y="192.5" width="11" height="9" fill="#ee4040" stroke="#000" stroke-width="1"/><line x1="536.5" y1="212" x2="536.5" y2="231" stroke="#000" stroke-width="1"/><rect x="530.5" y="217.5" width="11" height="13" fill="#ee4040" stroke="#000" stroke-width="1"/><line x1="549.5" y1="219" x2="549.5" y2="238" stroke="#000" stroke-width="1"/><rect x="543.5" y="231.5" width="11" height="4" fill="#40ee40" stroke="#000" stroke-width="1"/><line x1="562.5" y1="230" x2="562.5" y2="251" stroke="#000" stroke-width="1"/><rect x="556.5" y="233.5" width="11" height="14" fill="#40ee40" stroke="#000" stroke-width="1"/><line x1="575.5" y1="206" x2="575.5" y2="222" stroke="#000" stroke-width="1"/><rect x="569.5" y="217.5" width="11" height="2" fill="#40ee40" stroke="#000" stroke-width="1"/><line x1="588.5" y1="206" x2="588.5" y2="214" stroke="#000" stroke-width="1"/><rect x="582.5" y="209.5" width="11" height="3" fill="#40ee40" stroke="#000" stroke-width="1"/><line x1="601.5" y1="203" x2="601.5" y2="220" stroke="#000" stroke-width="1"/><rect x="595.5" y="211.5" width="11" height="3" fill="#ee4040" stroke="#000" stroke-width="1"/><line x1="613.5" y1="205" x2="613.5" y2="212" stroke="#000" stroke-width="1"/><rect x="607.5" y="209.5" width="11" height="2" fill="#ee4040" stroke="#000" stroke-width="1"/><line x1="626.5" y1="207" x2="626.5" y2="220" stroke="#000" stroke-width="1"/><rect x="620.5" y="215.5" width="11" height="4" fill="#40ee40" stroke="#000" stroke-width="1"/><line x1="639.5" y1="196" x2="639.5" y2="212" stroke="#000" stroke-width="1"/><rect x="633.5" y="202.5" width="11" height="8" fill="#40ee40" stroke="#000" stroke-width="1"/><line x1="652.5" y1="201" x2="652.5" y2="225" stroke="#000" stroke-width="1"/><rect x="646.5" y="204.5" width="11" height="20" fill="#ee4040" stroke="#000" stroke-width="1"/><line x1="665.5" y1="216" x2="665.5" y2="232" stroke="#000" stroke-width="1"/><rect x="659.5" y="220.5" width="11" height="3" fill="#40ee40" stroke="#000" stroke-width="1"/><line x1="679.5" y1="210" x2="679.5" y2="226" stroke="#000" stroke-width="1"/><rect x="673.5" y="212.5" width="11" height="12" fill="#ee4040" stroke="#000" stroke-width="1"/><line x1="691.5" y1="213" x2="691.5" y2="227" stroke="#000" stroke-width="1"/><rect x="685.5" y="216.5" width="11" height="8" fill="#40ee40" stroke="#000" stroke-width="1"/><line x1="705.5" y1="210" x2="705.5" y2="220" stroke="#000" stroke-width="1"/><rect x="699.5" y="213.5" width="11" height="1" fill="#000" stroke="#000" stroke-width="1"/><line x1="717.5" y1="208" x2="717.5" y2="224" stroke="#000" stroke-width="1"/><rect x="711.5" y="208.5" width="11" height="6" fill="#ee4040" stroke="#000" stroke-width="1"/><line x1="730.5" y1="194" x2="730.5" y2="210" stroke="#000" stroke-width="1"/><rect x="724.5" y="197.5" width="11" height="12" fill="#40ee40" stroke="#000" stroke-width="1"/><line x1="743.5" y1="194" x2="743.5" y2="204" stroke="#000" stroke-width="1"/><rect x="737.5" y="195.5" width="11" height="6" fill="#ee4040" stroke="#000" stroke-width="1"/><line x1="756.5" y1="185" x2="756.5" y2="195" stroke="#000" stroke-width="1"/><rect x="750.5" y="188.5" width="11" height="3" fill="#ee4040" stroke="#000" stroke-width="1"/><line x1="769.5" y1="194" x2="769.5" y2="203" stroke="#000" stroke-width="1"/><rect x="763.5" y="194.5" width="11" height="2" fill="#ee4040" stroke="#000" stroke-width="1"/><line x1="782.5" y1="193" x2="782.5" y2="203" stroke="#000" stroke-width="1"/><rect x="776.5" y="201.5" width="11" height="1" fill="#ee4040" stroke="#000" stroke-width="1"/><line x1="795.5" y1="192" x2="795.5" y2="204" stroke="#000" stroke-width="1"/><rect x="789.5" y="195.5" width="11" height="8" fill="#ee4040" stroke="#000" stroke-width="1"/>
<polyline points="570.6,202.3 581.2,202.3 592.5,201.2 601,200.9 609.5,201.6 619.4,202.9 633.5,202.3 644.9,202.3 659,202.6 673.2,202.6 684.5,202 690,202.4 699.9,201.5 714.6,202.9 724.5,203.1 736.8,202.2 746,202.5 756.5,201.6 770.1,203.4 783.6,203 796,201.9 807,200.8" fill="none" stroke="#000" stroke-width="2" stroke-linejoin="round" stroke-linecap="round"/>
<text x="805.2" y="181.4" font-size="10" font-weight="400" fill="#1a1a1a" text-anchor="start" textLength="28.8" lengthAdjust="spacingAndGlyphs" stroke="#1a1a1a" stroke-width="0.15">13.000</text>
<text x="805.2" y="206.4" font-size="10" font-weight="400" fill="#1a1a1a" text-anchor="start" textLength="28.8" lengthAdjust="spacingAndGlyphs" stroke="#1a1a1a" stroke-width="0.15">12.500</text>
<text x="805.2" y="232.4" font-size="10" font-weight="400" fill="#1a1a1a" text-anchor="start" textLength="28.8" lengthAdjust="spacingAndGlyphs" stroke="#1a1a1a" stroke-width="0.15">12.000</text>
<text x="805.2" y="258.9" font-size="10" font-weight="400" fill="#1a1a1a" text-anchor="start" textLength="28.8" lengthAdjust="spacingAndGlyphs" stroke="#1a1a1a" stroke-width="0.15">11.500</text>
<text x="805.2" y="288.3" font-size="10" font-weight="400" fill="#1a1a1a" text-anchor="start" textLength="28.8" lengthAdjust="spacingAndGlyphs" stroke="#1a1a1a" stroke-width="0.15">11.000</text>
<text x="805.2" y="317.2" font-size="10" font-weight="400" fill="#1a1a1a" text-anchor="start" textLength="28.8" lengthAdjust="spacingAndGlyphs" stroke="#1a1a1a" stroke-width="0.15">10.500</text>
<text x="805.2" y="348.9" font-size="10" font-weight="400" fill="#1a1a1a" text-anchor="start" textLength="28.8" lengthAdjust="spacingAndGlyphs" stroke="#1a1a1a" stroke-width="0.15">10.000</text>
<text x="805.2" y="381.9" font-size="10" font-weight="400" fill="#1a1a1a" text-anchor="start" textLength="23.5" lengthAdjust="spacingAndGlyphs" stroke="#1a1a1a" stroke-width="0.15">9.500</text>
<text x="805.2" y="415.9" font-size="10" font-weight="400" fill="#1a1a1a" text-anchor="start" textLength="23.5" lengthAdjust="spacingAndGlyphs" stroke="#1a1a1a" stroke-width="0.15">9.000</text>
<text x="805.2" y="452.9" font-size="10" font-weight="400" fill="#1a1a1a" text-anchor="start" textLength="23.5" lengthAdjust="spacingAndGlyphs" stroke="#1a1a1a" stroke-width="0.15">8.500</text>
<text x="805.2" y="491.9" font-size="10" font-weight="400" fill="#1a1a1a" text-anchor="start" textLength="23.5" lengthAdjust="spacingAndGlyphs" stroke="#1a1a1a" stroke-width="0.15">8.000</text>
<text x="45.0" y="508.5" font-size="10" font-weight="400" fill="#1a1a1a" text-anchor="middle" stroke="#1a1a1a" stroke-width="0.15">16.</text>
<text x="83.8" y="508.5" font-size="10" font-weight="400" fill="#1a1a1a" text-anchor="middle" stroke="#1a1a1a" stroke-width="0.15">21.</text>
<text x="122.6" y="508.5" font-size="10" font-weight="400" fill="#1a1a1a" text-anchor="middle" stroke="#1a1a1a" stroke-width="0.15">24.</text>
<text x="187.3" y="508.5" font-size="10" font-weight="400" fill="#1a1a1a" text-anchor="middle" stroke="#1a1a1a" stroke-width="0.15">04.</text>
<text x="226.1" y="508.5" font-size="10" font-weight="400" fill="#1a1a1a" text-anchor="middle" stroke="#1a1a1a" stroke-width="0.15">07.</text>
<text x="264.9" y="508.5" font-size="10" font-weight="400" fill="#1a1a1a" text-anchor="middle" stroke="#1a1a1a" stroke-width="0.15">12.</text>
<text x="303.7" y="508.5" font-size="10" font-weight="400" fill="#1a1a1a" text-anchor="middle" stroke="#1a1a1a" stroke-width="0.15">15.</text>
<text x="342.5" y="508.5" font-size="10" font-weight="400" fill="#1a1a1a" text-anchor="middle" stroke="#1a1a1a" stroke-width="0.15">20.</text>
<text x="381.3" y="508.5" font-size="10" font-weight="400" fill="#1a1a1a" text-anchor="middle" stroke="#1a1a1a" stroke-width="0.15">25.</text>
<text x="446.0" y="508.5" font-size="10" font-weight="400" fill="#1a1a1a" text-anchor="middle" stroke="#1a1a1a" stroke-width="0.15">02.</text>
<text x="484.8" y="508.5" font-size="10" font-weight="400" fill="#1a1a1a" text-anchor="middle" stroke="#1a1a1a" stroke-width="0.15">05.</text>
<text x="523.6" y="508.5" font-size="10" font-weight="400" fill="#1a1a1a" text-anchor="middle" stroke="#1a1a1a" stroke-width="0.15">10.</text>
<text x="562.4" y="508.5" font-size="10" font-weight="400" fill="#1a1a1a" text-anchor="middle" stroke="#1a1a1a" stroke-width="0.15">15.</text>
<text x="601.2" y="508.5" font-size="10" font-weight="400" fill="#1a1a1a" text-anchor="middle" stroke="#1a1a1a" stroke-width="0.15">18.</text>
<text x="640.0" y="508.5" font-size="10" font-weight="400" fill="#1a1a1a" text-anchor="middle" stroke="#1a1a1a" stroke-width="0.15">23.</text>
<text x="678.8" y="508.5" font-size="10" font-weight="400" fill="#1a1a1a" text-anchor="middle" stroke="#1a1a1a" stroke-width="0.15">26.</text>
<text x="717.6" y="508.5" font-size="10" font-weight="400" fill="#1a1a1a" text-anchor="middle" stroke="#1a1a1a" stroke-width="0.15">01.</text>
<text x="756.4" y="508.5" font-size="10" font-weight="400" fill="#1a1a1a" text-anchor="middle" stroke="#1a1a1a" stroke-width="0.15">06.</text>
<text x="187.3" y="519.9" font-size="10" font-weight="400" fill="#1a1a1a" text-anchor="middle" stroke="#1a1a1a" stroke-width="0.15">Mai</text>
<text x="446.0" y="519.9" font-size="10" font-weight="400" fill="#1a1a1a" text-anchor="middle" stroke="#1a1a1a" stroke-width="0.15">Juni</text>
<text x="717.6" y="519.9" font-size="10" font-weight="400" fill="#1a1a1a" text-anchor="middle" stroke="#1a1a1a" stroke-width="0.15">Juli</text>
</svg></body></html>
